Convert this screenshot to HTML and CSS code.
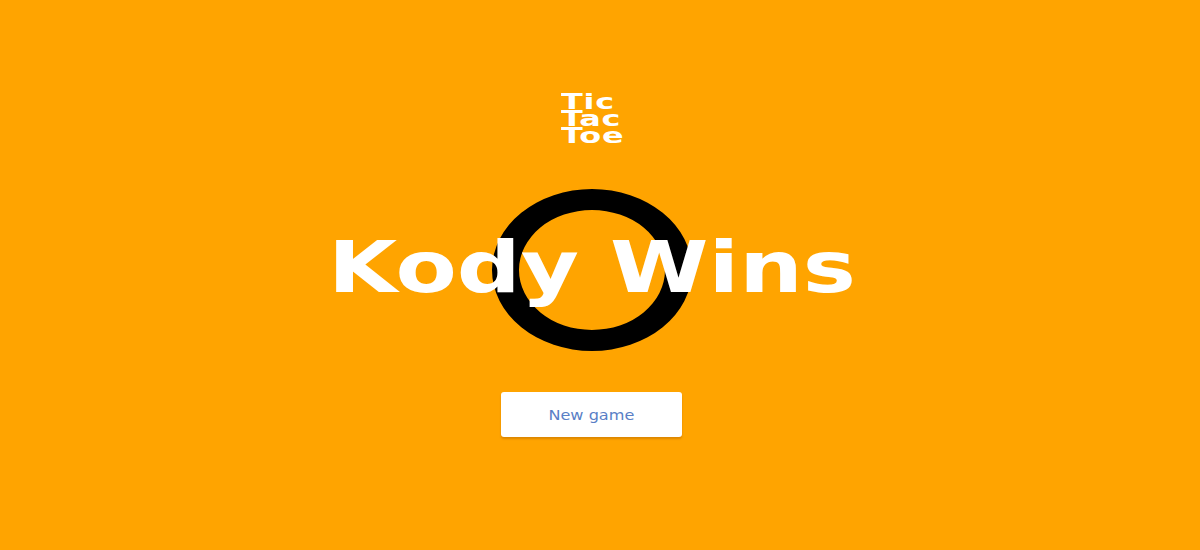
FILE: index.html
```html
<!DOCTYPE html>
<html lang="en">
<head>
<meta charset="utf-8">
<title>Tic Tac Toe</title>
<link rel="stylesheet" href="styles.css">
</head>
<body>
<main class="screen">
  <div class="logo">Tic<br>Tac<br>Toe</div>
  <section class="result">
    <span class="ring" aria-hidden="true"></span>
    <h1 class="result-title">Kody Wins</h1>
  </section>
  <button class="new-game" type="button"><span class="new-game-label">New game</span></button>
</main>
</body>
</html>
```
FILE: styles.css
```css
* { box-sizing: border-box; }
html, body { margin: 0; height: 100%; }
body {
  background: #ffa400;
  font-family: "DejaVu Sans", "Noto Sans", sans-serif;
  overflow: hidden;
}
.screen {
  height: 550px;
  display: flex;
  flex-direction: column;
  align-items: center;
  padding: 93px 17px 0 0;
}
.logo {
  color: #fff;
  font-weight: 700;
  font-size: 22px;
  line-height: 17px;
  letter-spacing: 0.5px;
  text-align: left;
  width: 42px;
  transform: scaleX(1.45);
  transform-origin: left top;
  margin-left: -19px;
}
.result {
  position: relative;
  margin-top: 33px;
  height: 180px;
  width: 600px;
  display: flex;
  justify-content: center;
  align-items: center;
}
.ring {
  position: absolute;
  left: 50%;
  top: 50%;
  width: 200px;
  height: 162px;
  margin-left: -100px;
  margin-top: -78px;
  border-radius: 50%;
  border-style: solid;
  border-color: #000;
  border-width: 21px 27px;
}
.result-title {
  position: relative;
  margin: 0;
  color: #fff;
  font-weight: 700;
  font-size: 72px;
  line-height: 1;
  letter-spacing: 0;
  white-space: nowrap;
  transform: scaleX(1.24);
}
.new-game {
  margin-top: 35px;
  width: 181px;
  height: 45px;
  background: #fff;
  border: none;
  border-radius: 3px;
  box-shadow: 0 2px 2px rgba(180, 100, 0, 0.45);
  color: #5a7fc6;
  font-family: "DejaVu Sans", sans-serif;
  font-size: 14px;
  font-weight: 400;
  cursor: pointer;
}
.new-game-label {
  display: inline-block;
  transform: scaleX(1.15);
}
```
